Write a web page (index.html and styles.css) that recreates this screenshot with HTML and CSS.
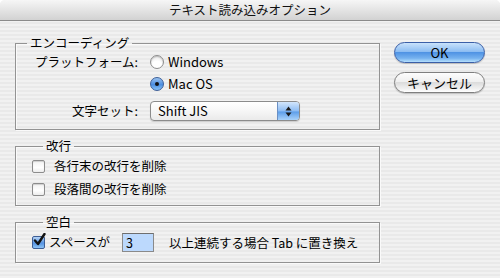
FILE: index.html
```html
<!DOCTYPE html>
<html lang="ja">
<head>
<meta charset="utf-8">
<title>テキスト読み込みオプション</title>
<link rel="stylesheet" href="styles.css">
</head>
<body>
<div class="window">
  <header class="titlebar">テキスト読み込みオプション</header>
  <div class="content">
    <div class="groups">
      <fieldset class="group enc">
        <legend>エンコーディング</legend>
        <div class="enc-grid">
          <span class="lbl">プラットフォーム:</span>
          <label class="radio"><span class="rb"></span>Windows</label>
          <span></span>
          <label class="radio"><span class="rb on"></span>Mac OS</label>
          <span class="lbl end">文字セット:</span>
          <div class="popup end">
            <span class="pv">Shift JIS</span>
            <span class="pa"><svg width="7" height="11" viewBox="0 0 7 11"><path d="M3.5 0.5 L6.5 4.5 L0.5 4.5 Z" fill="#1a1a1a"/><path d="M3.5 10.5 L6.5 6.5 L0.5 6.5 Z" fill="#1a1a1a"/></svg></span>
          </div>
        </div>
      </fieldset>
      <fieldset class="group breaks">
        <legend>改行</legend>
        <label class="check"><span class="cb"></span>各行末の改行を削除</label>
        <label class="check"><span class="cb"></span>段落間の改行を削除</label>
      </fieldset>
      <fieldset class="group space">
        <legend>空白</legend>
        <div class="space-row">
          <label class="check tight"><span class="cb on"><svg width="15" height="15" viewBox="0 0 15 15"><path d="M3 7.5 L6 11 L12.5 1" fill="none" stroke="#111" stroke-width="2.4" stroke-linecap="round" stroke-linejoin="round"/></svg></span>スペースが</label>
          <span class="field">3</span>
          <span class="after">以上連続する場合 Tab に置き換え</span>
        </div>
      </fieldset>
    </div>
    <div class="buttons">
      <button class="btn ok">OK</button>
      <button class="btn">キャンセル</button>
    </div>
  </div>
</div>
</body>
</html>
```
FILE: styles.css
```css
html, body {
  margin: 0;
  padding: 0;
  background: #fff;
}
body {
  font-family: "Noto Sans CJK JP", "Noto Sans", sans-serif;
  font-size: 12.5px;
  color: #000;
}
.window {
  width: 500px;
  height: 278px;
  border-radius: 5px 5px 0 0;
  overflow: hidden;
  background: repeating-linear-gradient(180deg, #f1f1f1 0 2px, #e9e9e9 2px 4px);
}
.titlebar {
  height: 20px;
  line-height: 20px;
  text-align: center;
  font-size: 12.5px;
  color: #111;
  background: linear-gradient(#f6f6f6, #e4e4e4 50%, #d2d2d2);
  border-bottom: 1px solid #8a8a8a;
}
.content {
  display: flex;
  padding: 15px 0 0 15px;
}
.groups {
  width: 365px;
  display: flex;
  flex-direction: column;
}
.group {
  margin: 0;
  border: 1px solid #939393;
  box-shadow: 1px 1px 0 #fafafa, inset 1px 1px 0 #fafafa;
  padding: 0;
  min-width: 0;
}
.group legend {
  margin-left: 11px;
  padding: 0 3px;
  line-height: 14px;
  font-size: 12.5px;
}
.enc {
  padding: 2px 0 8px 0;
}
.breaks {
  margin-top: 9px;
  padding: 3px 0 6px 16px;
  display: flex;
  flex-direction: column;
  gap: 3px;
}
.space {
  margin-top: 9px;
  padding: 3px 0 10px 16px;
}
.enc-grid {
  display: grid;
  grid-template-columns: 122px 1fr;
  grid-template-rows: 20px 20px 25px;
  column-gap: 12px;
  row-gap: 2px;
  align-items: center;
}
.lbl {
  text-align: right;
  line-height: 20px;
}
.end {
  align-self: end;
}
.radio {
  display: flex;
  align-items: center;
  gap: 4px;
  line-height: 20px;
  font-size: 13px;
}
.rb {
  width: 12px;
  height: 12px;
  border-radius: 50%;
  border: 1px solid #8d8d8d;
  background: radial-gradient(circle at 50% 80%, #ffffff 0 40%, #e8e8e8 80%), #f4f4f4;
  box-shadow: inset 0 1px 1px rgba(0,0,0,0.18);
  position: relative;
  flex: none;
}
.rb.on {
  border-color: #3c5f98;
  background: linear-gradient(#9cc3f0, #4b8ee0 55%, #88c2f6);
  box-shadow: none;
}
.rb.on::after {
  content: "";
  position: absolute;
  left: 4px;
  top: 4px;
  width: 4px;
  height: 4px;
  border-radius: 50%;
  background: #111;
}
.popup {
  width: 150px;
  height: 20px;
  box-sizing: border-box;
  border: 1px solid #8b8b8b;
  border-radius: 4px;
  display: flex;
  overflow: hidden;
  background: linear-gradient(#ffffff, #f6f6f6 50%, #eaeaea);
  box-shadow: 0 1px 1px rgba(0,0,0,0.15);
}
.pv {
  flex: 1;
  padding-left: 7px;
  line-height: 18px;
  font-size: 13px;
}
.pa {
  width: 21px;
  display: flex;
  align-items: center;
  justify-content: center;
  border-left: 1px solid #6a8fc4;
  background: linear-gradient(#d3e6fc, #8dbcf3 50%, #5d9ee9 55%, #a9d2fa);
}
.check {
  display: flex;
  align-items: center;
  gap: 9px;
  line-height: 20px;
  height: 20px;
}
.check.tight {
  gap: 4px;
}
.cb {
  width: 11px;
  height: 11px;
  border: 1px solid #8c8c8c;
  border-radius: 2px;
  background: linear-gradient(#f2f2f2, #ffffff 60%, #ececec);
  box-shadow: inset 0 1px 1px rgba(0,0,0,0.15);
  flex: none;
  position: relative;
}
.cb.on {
  border-color: #3d5e95;
  background: linear-gradient(#b6d4f6, #5593e2 55%, #8cc3f5);
  box-shadow: none;
}
.cb.on svg {
  position: absolute;
  left: -1px;
  top: -4px;
}
.space-row {
  display: flex;
  align-items: center;
  height: 20px;
}
.field {
  margin-left: 12px;
  width: 32px;
  height: 19px;
  box-sizing: border-box;
  border: 1px solid #8a8a8a;
  border-top-color: #6e6e6e;
  background: #bcd9fd;
  padding-left: 3px;
  line-height: 17px;
}
.after {
  margin-left: 15px;
}
.buttons {
  margin-left: 14px;
  padding-top: 6px;
  display: flex;
  flex-direction: column;
  gap: 9px;
}
.btn {
  width: 91px;
  height: 21px;
  box-sizing: border-box;
  border-radius: 11px;
  border: 1px solid #7f7f7f;
  font-family: "Noto Sans CJK JP", "Noto Sans", sans-serif;
  font-size: 13px;
  line-height: 18px;
  padding: 0;
  color: #000;
  background: linear-gradient(#fdfdfd, #f0f0f0 45%, #dcdcdc 50%, #f2f2f2 85%, #ffffff);
  box-shadow: 0 1px 1px rgba(0,0,0,0.2);
}
.btn.ok {
  border-color: #3b5fa7;
  background: linear-gradient(#c9e2fb, #8dbdf2 45%, #4f93e4 50%, #76b2ef 80%, #b6e0fd);
}
```
